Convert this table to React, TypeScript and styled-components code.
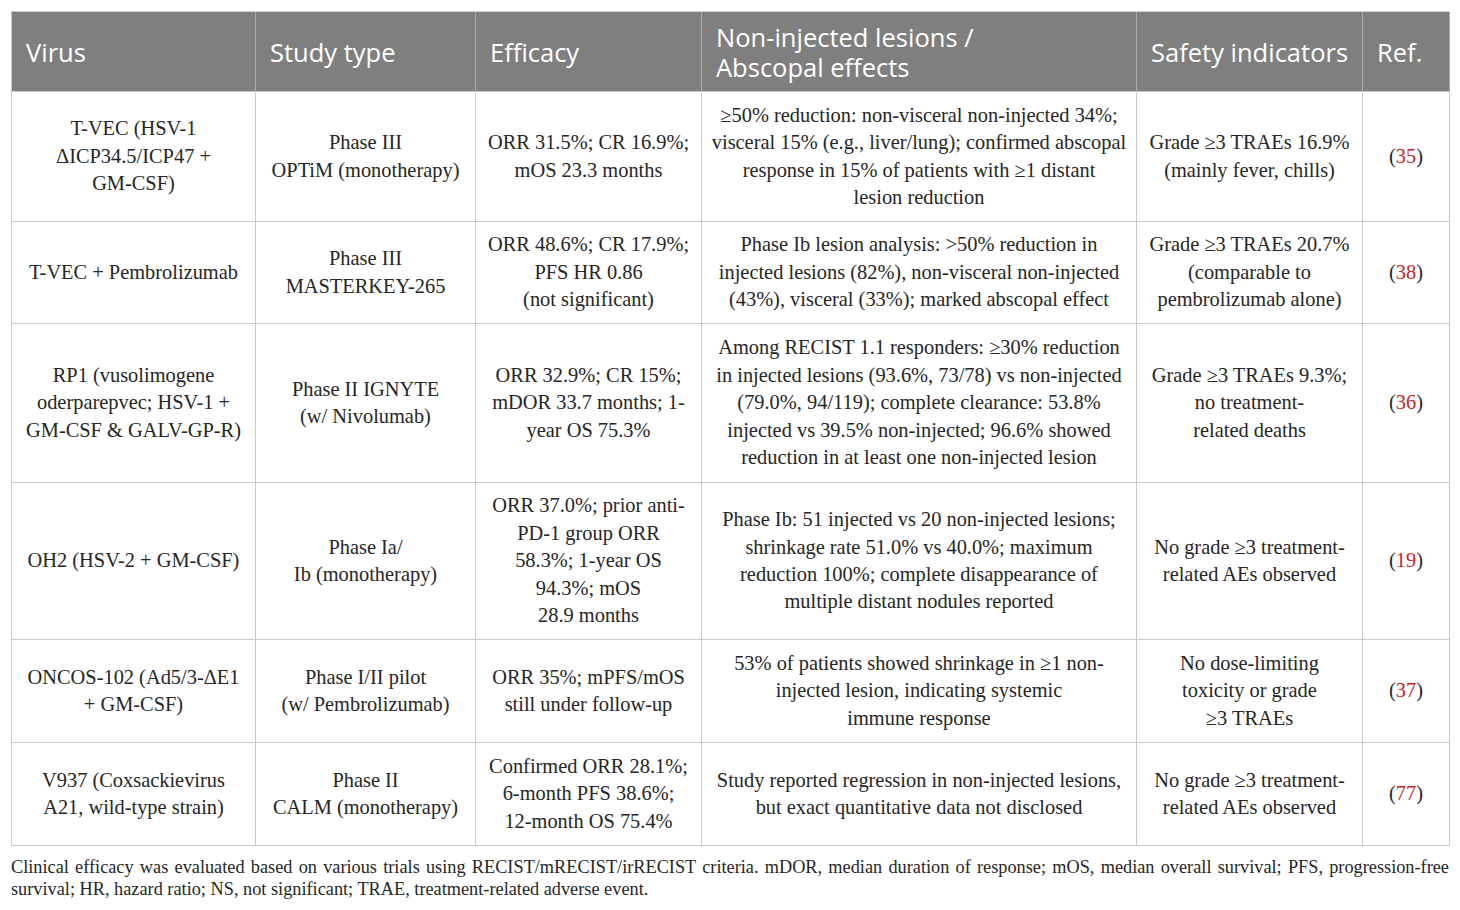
import React from "react";
import styled, { createGlobalStyle } from "styled-components";

const Global = createGlobalStyle`
  html, body { margin: 0; padding: 0; background: #ffffff; }
  body { width: 1460px; height: 910px; overflow: hidden; }
`;

const Page = styled.div`
  padding: 11px 11px 0 11px;
  box-sizing: border-box;
  width: 1460px;
`;

const Table = styled.div`
  display: grid;
  grid-template-columns: 244px 220px 226px 435px 226px 87px;
  grid-template-rows: 80px 130px 102px 159px 157px 103px 103px;
  border-left: 1px solid #c9c9c9;
  border-top: 1px solid #c9c9c9;
  width: 1438px;
  box-sizing: border-box;
`;

const HeadCell = styled.div`
  background: #7f7f7f;
  color: #ffffff;
  font-family: "Open Sans", "Noto Sans", sans-serif;
  font-size: 25.5px;
  line-height: 30px;
  display: flex;
  align-items: center;
  padding: 0 14px;
  border-right: 1px solid #a9a9a9;
  border-bottom: 1px solid #c9c9c9;
  box-sizing: border-box;
  white-space: nowrap;
`;

const Cell = styled.div`
  display: flex;
  align-items: center;
  justify-content: center;
  text-align: center;
  padding: 0 6px;
  border-right: 1px solid #c9c9c9;
  border-bottom: 1px solid #c9c9c9;
  box-sizing: border-box;
  font-family: "Liberation Serif", "Times New Roman", serif;
  font-size: 20.4px;
  line-height: 27.4px;
  color: #262626;
  white-space: nowrap;
`;

const RefLink = styled.span`
  color: #c8232c;
`;

const Footnote = styled.p`
  margin: 10px 0 0 0;
  width: 1438px;
  font-family: "Liberation Serif", "Times New Roman", serif;
  font-size: 18.3px;
  line-height: 22px;
  color: #262626;
  text-align: justify;
`;

type Row = { cells: string[][]; ref: string };

const rows: Row[] = [
  {
    cells: [
      ["T-VEC (HSV-1", "ΔICP34.5/ICP47 +", "GM-CSF)"],
      ["Phase III", "OPTiM (monotherapy)"],
      ["ORR 31.5%; CR 16.9%;", "mOS 23.3 months"],
      [
        "≥50% reduction: non-visceral non-injected 34%;",
        "visceral 15% (e.g., liver/lung); confirmed abscopal",
        "response in 15% of patients with ≥1 distant",
        "lesion reduction",
      ],
      ["Grade ≥3 TRAEs 16.9%", "(mainly fever, chills)"],
    ],
    ref: "35",
  },
  {
    cells: [
      ["T-VEC + Pembrolizumab"],
      ["Phase III", "MASTERKEY-265"],
      ["ORR 48.6%; CR 17.9%;", "PFS HR 0.86", "(not significant)"],
      [
        "Phase Ib lesion analysis: >50% reduction in",
        "injected lesions (82%), non-visceral non-injected",
        "(43%), visceral (33%); marked abscopal effect",
      ],
      ["Grade ≥3 TRAEs 20.7%", "(comparable to", "pembrolizumab alone)"],
    ],
    ref: "38",
  },
  {
    cells: [
      ["RP1 (vusolimogene", "oderparepvec; HSV-1 +", "GM-CSF & GALV-GP-R)"],
      ["Phase II IGNYTE", "(w/ Nivolumab)"],
      ["ORR 32.9%; CR 15%;", "mDOR 33.7 months; 1-", "year OS 75.3%"],
      [
        "Among RECIST 1.1 responders: ≥30% reduction",
        "in injected lesions (93.6%, 73/78) vs non-injected",
        "(79.0%, 94/119); complete clearance: 53.8%",
        "injected vs 39.5% non-injected; 96.6% showed",
        "reduction in at least one non-injected lesion",
      ],
      ["Grade ≥3 TRAEs 9.3%;", "no treatment-", "related deaths"],
    ],
    ref: "36",
  },
  {
    cells: [
      ["OH2 (HSV-2 + GM-CSF)"],
      ["Phase Ia/", "Ib (monotherapy)"],
      ["ORR 37.0%; prior anti-", "PD-1 group ORR", "58.3%; 1-year OS", "94.3%; mOS", "28.9 months"],
      [
        "Phase Ib: 51 injected vs 20 non-injected lesions;",
        "shrinkage rate 51.0% vs 40.0%; maximum",
        "reduction 100%; complete disappearance of",
        "multiple distant nodules reported",
      ],
      ["No grade ≥3 treatment-", "related AEs observed"],
    ],
    ref: "19",
  },
  {
    cells: [
      ["ONCOS-102 (Ad5/3-ΔE1", "+ GM-CSF)"],
      ["Phase I/II pilot", "(w/ Pembrolizumab)"],
      ["ORR 35%; mPFS/mOS", "still under follow-up"],
      [
        "53% of patients showed shrinkage in ≥1 non-",
        "injected lesion, indicating systemic",
        "immune response",
      ],
      ["No dose-limiting", "toxicity or grade", "≥3 TRAEs"],
    ],
    ref: "37",
  },
  {
    cells: [
      ["V937 (Coxsackievirus", "A21, wild-type strain)"],
      ["Phase II", "CALM (monotherapy)"],
      ["Confirmed ORR 28.1%;", "6-month PFS 38.6%;", "12-month OS 75.4%"],
      [
        "Study reported regression in non-injected lesions,",
        "but exact quantitative data not disclosed",
      ],
      ["No grade ≥3 treatment-", "related AEs observed"],
    ],
    ref: "77",
  },
];

const headers: string[][] = [
  ["Virus"],
  ["Study type"],
  ["Efficacy"],
  ["Non-injected lesions /", "Abscopal effects"],
  ["Safety indicators"],
  ["Ref."],
];

const Lines: React.FC<{ lines: string[] }> = ({ lines }) => (
  <span>
    {lines.map((l, i) => (
      <React.Fragment key={i}>
        {i > 0 && <br />}
        {l}
      </React.Fragment>
    ))}
  </span>
);

export default function App() {
  return (
    <>
      <Global />
      <Page>
        <Table>
          {headers.map((h, i) => (
            <HeadCell key={"h" + i}>
              <Lines lines={h} />
            </HeadCell>
          ))}
          {rows.map((r, ri) => (
            <React.Fragment key={ri}>
              {r.cells.map((c, ci) => (
                <Cell key={ci}>
                  <Lines lines={c} />
                </Cell>
              ))}
              <Cell>
                <span>
                  (<RefLink>{r.ref}</RefLink>)
                </span>
              </Cell>
            </React.Fragment>
          ))}
        </Table>
        <Footnote>
          Clinical efficacy was evaluated based on various trials using RECIST/mRECIST/irRECIST criteria. mDOR, median
          duration of response; mOS, median overall survival; PFS, progression-free survival; HR, hazard ratio; NS, not
          significant; TRAE, treatment-related adverse event.
        </Footnote>
      </Page>
    </>
  );
}
